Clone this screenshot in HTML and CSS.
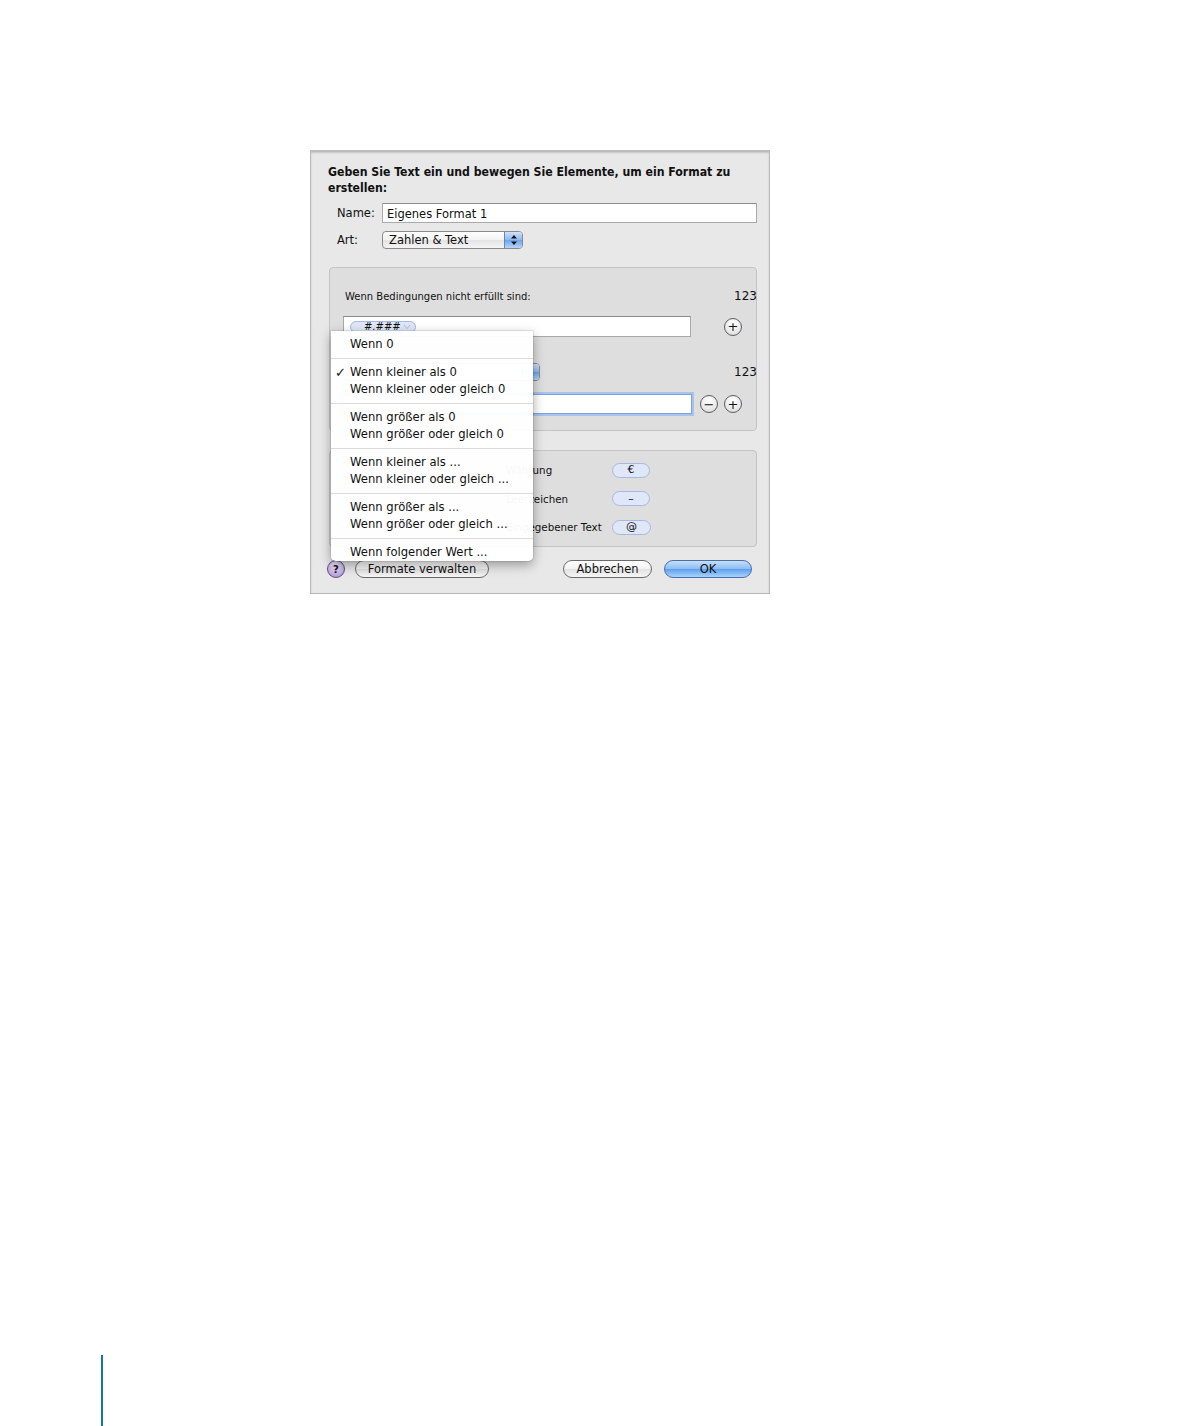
FILE: index.html
```html
<!DOCTYPE html>
<html lang="de">
<head>
    <meta charset="UTF-8">
    <title>Eigenes Format</title>
    <link rel="stylesheet" href="styles.css">
</head>
<body>
    <div class="dialog">
        <div class="title">Geben Sie Text ein und bewegen Sie Elemente, um ein Format zu erstellen:</div>

        <div class="row name-row">
            <span class="label">Name:</span>
            <div class="textfield">Eigenes Format 1</div>
        </div>
        <div class="row art-row">
            <span class="label">Art:</span>
            <div class="popup">
                <span class="popup-text">Zahlen &amp; Text</span>
                <span class="popup-arrows">
                    <svg width="8" height="12" viewBox="0 0 8 12"><path d="M4 1 L7 4.5 H1 Z M4 11 L7 7.5 H1 Z" fill="#111"/></svg>
                </span>
            </div>
        </div>

        <div class="group conditions">
            <div class="cond-head">
                <span class="small">Wenn Bedingungen nicht erfüllt sind:</span>
                <span class="sample">123</span>
            </div>
            <div class="cond-row">
                <div class="tokenfield">
                    <span class="token italic">#.###
                        <svg width="8" height="6" viewBox="0 0 8 6"><path d="M1 1 L4 4.5 L7 1" fill="none" stroke="#b4bccb" stroke-width="1"/></svg>
                    </span>
                </div>
                <div class="round-buttons">
                    <span class="round">+</span>
                </div>
            </div>
            <div class="cond-head second">
                <div class="popup cond-popup">
                    <span class="popup-text"></span>
                    <span class="popup-arrows"></span>
                </div>
                <span class="sample">123</span>
            </div>
            <div class="cond-row second">
                <div class="tokenfield focused"></div>
                <div class="round-buttons">
                    <span class="round">&minus;</span>
                    <span class="round">+</span>
                </div>
            </div>
        </div>

        <div class="group elements">
            <div class="elem-row">
                <span class="elem-label">Währung</span>
                <span class="token elem-token">€</span>
            </div>
            <div class="elem-row">
                <span class="elem-label">Leerzeichen</span>
                <span class="token elem-token">&ndash;</span>
            </div>
            <div class="elem-row">
                <span class="elem-label">Eingegebener Text</span>
                <span class="token elem-token wide">@</span>
            </div>
        </div>

        <div class="footer-row">
            <span class="help">?</span>
            <span class="button manage">Formate verwalten</span>
            <span class="spacer"></span>
            <span class="button cancel">Abbrechen</span>
            <span class="button ok">OK</span>
        </div>

        <div class="menu">
            <div class="item">Wenn 0</div>
            <div class="sep"></div>
            <div class="item"><span class="check">✓</span>Wenn kleiner als 0</div>
            <div class="item">Wenn kleiner oder gleich 0</div>
            <div class="sep"></div>
            <div class="item">Wenn größer als 0</div>
            <div class="item">Wenn größer oder gleich 0</div>
            <div class="sep"></div>
            <div class="item">Wenn kleiner als ...</div>
            <div class="item">Wenn kleiner oder gleich ...</div>
            <div class="sep"></div>
            <div class="item">Wenn größer als ...</div>
            <div class="item">Wenn größer oder gleich ...</div>
            <div class="sep"></div>
            <div class="item">Wenn folgender Wert ...</div>
        </div>
    </div>

    <div class="page-rule"></div>
</body>
</html>
```

FILE: styles.css
```css
body {
    margin: 0;
    padding: 150px 0 0 0;
    background: #ffffff;
    font-family: 'DejaVu Sans', sans-serif;
    font-size: 11px;
    color: #111;
}

.dialog {
    position: relative;
    width: 460px;
    height: 444px;
    margin-left: 310px;
    padding: 12px 11px 0 17px;
    box-sizing: border-box;
    background: #e8e8e8;
    border: 1px solid #b9b9b9;
    border-top: 2px solid #bdbdbd;
    box-shadow: inset 0 1px 2px rgba(0, 0, 0, 0.15);
}

.title {
    font-family: 'DejaVu Sans Condensed', 'DejaVu Sans', sans-serif;
    font-weight: bold;
    font-size: 12.2px;
    line-height: 16px;
    width: 425px;
}

.row {
    display: flex;
    align-items: center;
    padding-left: 9px;
}

.label {
    width: 45px;
    font-size: 11.5px;
}

.name-row {
    margin-top: 7px;
    height: 20px;
}

.textfield {
    flex: 1;
    height: 20px;
    line-height: 20px;
    margin-right: 1px;
    padding-left: 4px;
    background: #fff;
    border: 1px solid #a9a9a9;
    border-top-color: #8e8e8e;
    box-sizing: border-box;
    font-size: 11.5px;
}

.art-row {
    margin-top: 8px;
    height: 18px;
}

.popup {
    display: flex;
    width: 141px;
    height: 18px;
    border: 1px solid #8a8a8a;
    border-radius: 4px;
    box-sizing: border-box;
    background: linear-gradient(#ffffff, #f2f2f2 50%, #e4e4e4 51%, #f4f4f4);
    overflow: hidden;
}

.popup-text {
    flex: 1;
    padding-left: 6px;
    line-height: 16px;
    font-size: 11.5px;
}

.popup-arrows {
    width: 17px;
    display: flex;
    align-items: center;
    justify-content: center;
    border-left: 1px solid #5f86c4;
    background: linear-gradient(#cfe2fb, #8db8ee 50%, #6ea4ea 51%, #b6d5fb);
}

.group {
    margin-top: 18px;
    margin-left: 1px;
    width: 428px;
    box-sizing: border-box;
    background: #dedede;
    border: 1px solid #c4c4c4;
    border-radius: 4px;
}

.conditions {
    height: 164px;
    padding: 20px 0 0 13px;
}

.cond-head {
    display: flex;
    align-items: center;
    justify-content: space-between;
    height: 16px;
}

.cond-head.second {
    margin-top: 26px;
    height: 18px;
}

.cond-popup {
    width: 197px;
}

.small {
    font-size: 10px;
    padding-left: 2px;
}

.sample {
    font-size: 12px;
    margin-right: -1px;
}

.cond-row {
    display: flex;
    align-items: center;
    margin-top: 12px;
    height: 21px;
}

.cond-row.second {
    margin-top: 13px;
    height: 20px;
}

.tokenfield {
    width: 348px;
    height: 21px;
    box-sizing: border-box;
    background: #fff;
    border: 1px solid #a8a8a8;
    border-top-color: #8a8a8a;
    padding: 4px 0 0 6px;
}

.tokenfield.focused {
    width: 349px;
    height: 20px;
    border: 1px solid #7ea3dc;
    box-shadow: 0 0 0 2px #a7c4ee;
}

.token {
    display: inline-flex;
    align-items: center;
    justify-content: center;
    gap: 2px;
    height: 12px;
    box-sizing: border-box;
    padding: 0 4px 0 13px;
    border: 1px solid #a7b9e2;
    border-radius: 7px;
    background: #dfe7f8;
    font-size: 10px;
    line-height: 12px;
    vertical-align: top;
}

.italic {
    font-style: italic;
}

.round-buttons {
    display: flex;
    gap: 6px;
    margin-left: auto;
    width: 42px;
    justify-content: flex-end;
    margin-right: 14px;
}

.round {
    width: 18px;
    height: 18px;
    box-sizing: border-box;
    border: 1px solid #5c5c5c;
    border-radius: 50%;
    background: radial-gradient(circle at 50% 30%, #ffffff, #e9e9e9 60%, #d4d4d4);
    display: flex;
    align-items: center;
    justify-content: center;
    font-size: 13px;
    line-height: 1;
}

.elements {
    margin-top: 19px;
    height: 97px;
    padding: 11px 0 0 176px;
}

.elem-row {
    display: flex;
    align-items: center;
    height: 16px;
    margin-bottom: 12.5px;
}

.elem-label {
    font-size: 10.3px;
    width: 106px;
}

.elem-token {
    width: 38px;
    height: 15px;
    padding: 0;
    border-radius: 8px;
    font-size: 11px;
}

.elem-token.wide {
    width: 39px;
}

.footer-row {
    display: flex;
    align-items: center;
    margin-top: 12px;
    height: 20px;
}

.help {
    width: 18px;
    height: 18px;
    margin-left: -1px;
    box-sizing: border-box;
    border: 1px solid #5e4d82;
    border-radius: 50%;
    background: radial-gradient(circle at 50% 30%, #eee6fb, #c4b1e6 60%, #a48ad2);
    font-weight: bold;
    font-size: 10px;
    display: flex;
    align-items: center;
    justify-content: center;
}

.button {
    height: 18px;
    box-sizing: border-box;
    border: 1px solid #6a6a6a;
    border-radius: 9px;
    background: linear-gradient(#ffffff, #f3f3f3 50%, #e2e2e2 51%, #f6f6f6);
    text-align: center;
    line-height: 16px;
    font-size: 11.5px;
}

.manage {
    margin-left: 10px;
    width: 134px;
}

.spacer {
    flex: 1;
}

.cancel {
    width: 89px;
}

.ok {
    width: 88px;
    margin-left: 12px;
    margin-right: 6px;
    border-color: #4a6ea8;
    background: linear-gradient(#c6dffb, #8bbdf3 50%, #5c9fec 51%, #a9d3fd);
}

.menu {
    position: absolute;
    left: 20px;
    top: 179px;
    width: 202px;
    padding: 5px 0 0;
    background: rgba(255, 255, 255, 0.97);
    border-radius: 0 0 5px 5px;
    box-shadow: 0 4px 12px rgba(0, 0, 0, 0.35), 0 0 0 1px rgba(0, 0, 0, 0.08);
}

.item {
    position: relative;
    height: 17px;
    line-height: 17px;
    padding-left: 19px;
    font-size: 11.6px;
    white-space: nowrap;
}

.check {
    position: absolute;
    left: 4px;
    font-size: 13px;
    font-weight: bold;
}

.sep {
    height: 1px;
    margin: 5px 0;
    background: #dcdcdc;
}

.page-rule {
    margin: 761px 0 0 101px;
    width: 2px;
    height: 71px;
    background: #1371c4;
}
```
